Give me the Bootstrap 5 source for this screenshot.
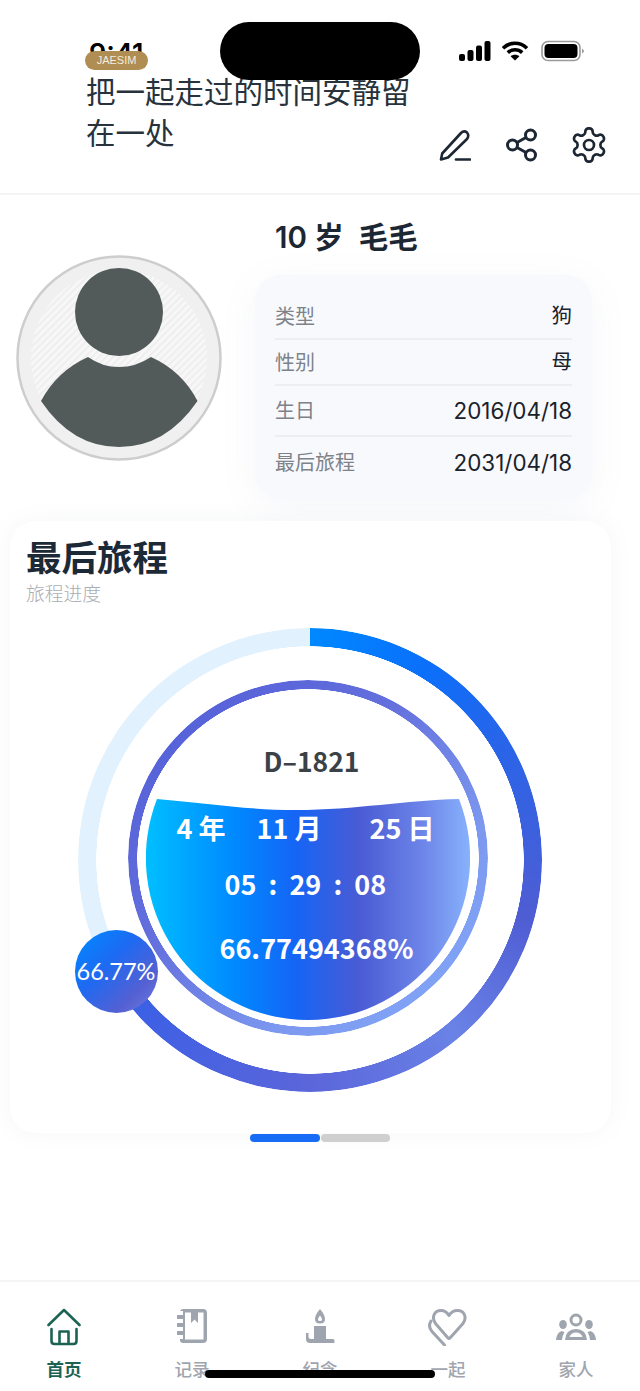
<!DOCTYPE html>
<html lang="zh">
<head>
  <meta charset="UTF-8">
  <meta name="viewport" content="width=device-width, initial-scale=1.0">
  <title>最后旅程</title>
  <link href="https://cdn.jsdelivr.net/npm/bootstrap@5.3.0/dist/css/bootstrap.min.css" rel="stylesheet">
  <style>
    body {
      font-family: Inter, "Noto Sans CJK SC", sans-serif;
      background: #fff;
      color: #1c2733;
    }
    .phone {
      width: 640px;
      height: 1391px;
      overflow: hidden;
    }
    /* status bar + island lie over the header */
    .clock { left: 89px; top: 37px; font-size: 27px; font-weight: 600; color: #000; line-height: 34px; }
    .island { left: 220px; top: 22px; width: 200px; height: 58px; background: #000; border-radius: 29px; z-index: 5; }
    .status-icons { left: 458px; top: 40px; gap: 10px; }
    .status-icons svg:last-child { margin-left: 2px; }
    .home-bar { left: 205px; top: 1370px; width: 230px; height: 8px; background: #000; border-radius: 4px; z-index: 5; }

    .top-head { height: 195px; padding: 51px 31px 0 85px; border-bottom: 2px solid #f3f4f5; }
    .tag-pill { width: 63px; height: 19px; background: #b08d52; color: #f3ecdf; font: 11px/18px "Liberation Sans", sans-serif; text-align: center; border-radius: 9.5px; z-index: 2; }
    .head-title { width: 335px; font-size: 29.5px; line-height: 41px; color: #27323c; margin: 2px 0 0 1px; font-weight: 400; }
    .head-tools { gap: 31px; padding-bottom: 28px; }
    .tool-pen { margin: 0 4px 4px 0; }
    .tool-share { margin-bottom: 3px; }

    .avatar-box { width: 206px; height: 206px; margin: 60px 0 0 16px; }
    .side-info { width: 337px; margin-left: 33px; }
    .pet-name { font-size: 29.5px; line-height: 40px; font-weight: 600; padding: 22px 0 0 20px; color: #1c2733; }
    .info-box { margin-top: 18px; background: #f8f9fd; border-radius: 26px; padding: 19px 20px 12px; box-shadow: 0 8px 36px rgba(130, 140, 180, .08); }
    .info-line { font-size: 22.4px; color: #1a222b; padding-top: 1px; }
    .info-line + .info-line { border-top: 2px solid #eceef1; }
    .info-line span:first-child { color: #7d8389; font-size: 20px; }
    .info-line .cjk-val { font-size: 20.5px; }
    .h-a { height: 44px; }
    .h-b { height: 46px; }
    .h-c { height: 51px; }
    .h-d { height: 52px; }

    .trip-box { width: 601px; margin: 22px 0 0 10px; padding: 13px 16px 41px; border-radius: 26px; background: #fff; box-shadow: 0 0 22px rgba(120, 130, 150, .07); }
    .trip-title { font-size: 35.5px; line-height: 44px; font-weight: 700; color: #1c2a38; font-family: "Noto Sans CJK SC", sans-serif; }
    .trip-sub { font-size: 18.75px; line-height: 24px; margin-top: 5px; color: #a9adb2; font-weight: 300; }

    .dial { width: 464px; height: 464px; margin: 21px auto 0; left: -1px; }
    .ring-outer {
      inset: 0;
      border-radius: 50%;
      background: conic-gradient(#0088ff 0deg, #0a70fb 30deg, #2a64e8 60deg, #4f5dd3 105deg, #6a82e6 140deg, #5b66da 180deg, #3f60e4 225deg, #2f62e6 240.4deg, #e1f2fe 240.4deg, #e1f2fe 360deg);
      -webkit-mask: radial-gradient(closest-side, transparent calc(100% - 18.5px), #000 calc(100% - 18px));
      mask: radial-gradient(closest-side, transparent calc(100% - 18.5px), #000 calc(100% - 18px));
    }
    .ring-inner {
      left: 50px; top: 52px; width: 360px; height: 356px;
      border-radius: 50%;
      background: linear-gradient(135deg, #4f5bd5 0%, #6470dd 40%, #7c98ef 70%, #84acfb 100%);
      -webkit-mask: radial-gradient(closest-side, transparent calc(100% - 9.5px), #000 calc(100% - 9px));
      mask: radial-gradient(closest-side, transparent calc(100% - 9.5px), #000 calc(100% - 9px));
    }
    .day-count { left: 50px; top: 114px; width: 368px; text-align: center; font: 700 26.5px/38px "Noto Sans CJK SC", sans-serif; color: #3a4248; }
    .tank { left: 68px; top: 171px; width: 324px; height: 222px; font-family: "Noto Sans CJK SC", sans-serif; font-weight: 700; color: #fff; }
    .tank svg { left: 0; top: 0; }
    .tank-text { padding-top: 9px; }
    .tank-date { height: 40px; font-size: 27px; line-height: 40px; }
    .tank-date span:nth-child(1) { margin-left: 31px; width: 80px; }
    .tank-date span:nth-child(2) { width: 113px; }
    .tank-time { font-size: 27px; line-height: 40px; margin: 16px 0 0 79px; word-spacing: 6px; }
    .tank-pct { font-size: 27px; line-height: 40px; margin: 24px 0 0 74px; }
    .bubble { left: -3px; top: 302px; width: 83px; height: 83px; border-radius: 50%; background: linear-gradient(135deg, #0088ff 5%, #1e6af2 40%, #5560d2 75%, #6e80e2 100%); color: #fff; font: 400 23.5px/83px Lato, sans-serif; text-align: center; white-space: nowrap; }

    .pager { margin-top: 1px; gap: 1px; }
    .pager i { display: block; width: 70px; height: 8px; border-radius: 4px; background: #cfcfcf; }
    .pager i:first-child { background: #176cf5; }
    .pager i:last-child { width: 69px; }

    .tab-bar { margin-top: auto; height: 111px; border-top: 2px solid #f3f4f5; padding-top: 26px; }
    .tab-item { width: 128px; color: #9fa5ae; font-size: 17.5px; line-height: 24px; font-weight: 500; }
    .tab-item.on { color: #1d6354; font-weight: 700; }
    .tab-pic { height: 38px; margin-bottom: 12px; }
  </style>
</head>
<body>
<div class="phone position-relative d-flex flex-column">

  <!-- status bar -->
  <div class="clock position-absolute">9:41</div>
  <div class="island position-absolute"></div>
  <div class="status-icons position-absolute d-flex align-items-center">
    <svg width="33" height="22" viewBox="0 0 33 22" fill="#000">
      <rect x="1" y="14" width="6" height="7" rx="2"/><rect x="9.5" y="10" width="6" height="11" rx="2"/>
      <rect x="18" y="5.5" width="6" height="15.5" rx="2"/><rect x="26.5" y="1" width="6" height="20" rx="2"/>
    </svg>
    <svg width="28" height="22" viewBox="0 0 28 22" fill="none" stroke="#000" stroke-width="3.6">
      <path d="M2 8.2C9 1.6 19 1.6 26 8.2"/><path d="M6.8 12.6C11 8.8 17 8.8 21.2 12.6"/>
      <path d="M14 20.5L9.6 16.2C12 14.2 16 14.2 18.4 16.2Z" fill="#000" stroke="none"/>
    </svg>
    <svg width="44" height="22" viewBox="0 0 44 22" fill="none">
      <rect x="1" y="1.5" width="38" height="19" rx="6" stroke="#9a9a9a" stroke-width="1.6"/>
      <rect x="3.5" y="4" width="33" height="14" rx="4" fill="#000"/>
      <path d="M41 8.5Q43 10 43 11Q43 12 41 13.5Z" fill="#9a9a9a"/>
    </svg>
  </div>

  <!-- header -->
  <header class="top-head d-flex justify-content-between flex-shrink-0">
    <div>
      <div class="tag-pill position-relative">JAESIM</div>
      <div class="head-title">把一起走过的时间安静留在一处</div>
    </div>
    <div class="head-tools d-flex align-items-end">
      <svg class="tool-pen" width="32" height="32" viewBox="0 0 32 32" fill="none" stroke="#1c2733" stroke-width="2.6" stroke-linecap="round" stroke-linejoin="round">
        <path d="M2 30.5L3.2 24.5L22 4Q25 1 28 3.5Q30.5 6.5 28 10L9 28.5Z"/><path d="M17 30.5H31"/>
      </svg>
      <svg class="tool-share" width="32" height="34" viewBox="0 0 32 34" fill="none" stroke="#1c2733" stroke-width="3">
        <circle cx="24.5" cy="7" r="5"/><circle cx="6.5" cy="17" r="5"/><circle cx="24.5" cy="27" r="5"/>
        <path d="M11 14.5L20 9.5M11 19.5L20 24.5"/>
      </svg>
      <svg width="40" height="40" viewBox="0 0 24 24" fill="none" stroke="#1c2733" stroke-width="1.6" stroke-linecap="round" stroke-linejoin="round">
        <path d="M12.22 2h-.44a2 2 0 0 0-2 2v.18a2 2 0 0 1-1 1.73l-.43.25a2 2 0 0 1-2 0l-.15-.08a2 2 0 0 0-2.73.73l-.22.38a2 2 0 0 0 .73 2.73l.15.1a2 2 0 0 1 1 1.72v.51a2 2 0 0 1-1 1.74l-.15.09a2 2 0 0 0-.73 2.73l.22.38a2 2 0 0 0 2.73.73l.15-.08a2 2 0 0 1 2 0l.43.25a2 2 0 0 1 1 1.73V20a2 2 0 0 0 2 2h.44a2 2 0 0 0 2-2v-.18a2 2 0 0 1 1-1.73l.43-.25a2 2 0 0 1 2 0l.15.08a2 2 0 0 0 2.73-.73l.22-.39a2 2 0 0 0-.73-2.73l-.15-.08a2 2 0 0 1-1-1.74v-.5a2 2 0 0 1 1-1.74l.15-.09a2 2 0 0 0 .73-2.73l-.22-.38a2 2 0 0 0-2.73-.73l-.15.08a2 2 0 0 1-2 0l-.43-.25a2 2 0 0 1-1-1.73V4a2 2 0 0 0-2-2z"/>
        <circle cx="12" cy="12" r="3"/>
      </svg>
    </div>
  </header>

  <!-- profile -->
  <section class="d-flex flex-shrink-0">
    <div class="avatar-box flex-shrink-0">
      <svg width="206" height="206" viewBox="0 0 206 206">
        <defs>
          <pattern id="hatch" width="5" height="5" patternUnits="userSpaceOnUse" patternTransform="rotate(-45)">
            <rect width="5" height="5" fill="#f7f7f7"/><rect width="5" height="1.5" fill="#ececec"/>
          </pattern>
        </defs>
        <circle cx="103" cy="103" r="101.5" fill="#f0f0f0" stroke="#cdcdcd" stroke-width="2.5"/>
        <circle cx="103" cy="103" r="88" fill="url(#hatch)"/>
        <circle cx="103" cy="57" r="44" fill="#535a5a"/>
        <path d="M25 146Q41 116 72 102Q86 112 103 112Q120 112 135 102Q166 116 181.5 146Q150 192 103 192Q56 192 25 146Z" fill="#535a5a"/>
      </svg>
    </div>
    <div class="side-info">
      <div class="pet-name">10 岁&nbsp; 毛毛</div>
      <div class="info-box">
        <div class="info-line h-a d-flex justify-content-between align-items-center"><span>类型</span><span class="cjk-val">狗</span></div>
        <div class="info-line h-b d-flex justify-content-between align-items-center"><span>性别</span><span class="cjk-val">母</span></div>
        <div class="info-line h-c d-flex justify-content-between align-items-center"><span>生日</span><span>2016/04/18</span></div>
        <div class="info-line h-d d-flex justify-content-between align-items-center"><span>最后旅程</span><span>2031/04/18</span></div>
      </div>
    </div>
  </section>

  <!-- journey -->
  <section class="trip-box flex-shrink-0">
    <div class="trip-title">最后旅程</div>
    <div class="trip-sub">旅程进度</div>
    <div class="dial position-relative">
      <div class="ring-outer position-absolute"></div>
      <div class="ring-inner position-absolute"></div>
      <div class="day-count position-absolute">D–1821</div>
      <div class="tank position-absolute">
        <svg class="position-absolute" width="324" height="222" viewBox="0 0 324 222">
          <defs>
            <linearGradient id="water" x1="0" x2="1" y1="0" y2="0">
              <stop offset="0" stop-color="#00bfff"/><stop offset=".28" stop-color="#0088ff"/>
              <stop offset=".46" stop-color="#1565f5"/><stop offset=".66" stop-color="#4a5bd4"/>
              <stop offset=".85" stop-color="#6c84e8"/><stop offset="1" stop-color="#88b2fc"/>
            </linearGradient>
          </defs>
          <path d="M11 0C60 4 100 11 150 11C210 11 260 1 313 0A162 162 0 0 1 162 221A162 162 0 0 1 11 0Z" fill="url(#water)"/>
        </svg>
        <div class="tank-text position-relative">
          <div class="tank-date d-flex"><span>4 年</span><span>11 月</span><span>25 日</span></div>
          <div class="tank-time">05 : 29 : 08</div>
          <div class="tank-pct">66.77494368%</div>
        </div>
      </div>
      <div class="bubble position-absolute">66.77%</div>
    </div>
  </section>

  <div class="pager d-flex justify-content-center">
    <i></i><i></i>
  </div>

  <!-- tabs -->
  <nav class="tab-bar d-flex">
    <div class="tab-item on d-flex flex-column align-items-center">
      <div class="tab-pic">
        <svg width="34" height="38" viewBox="0 0 34 38" fill="none" stroke="#1d6354" stroke-width="2.6" stroke-linecap="round" stroke-linejoin="round">
          <path d="M1.5 17L17 2L32.5 17"/><path d="M4.5 21V33Q4.5 36 7.5 36H26.5Q29.5 36 29.5 33V21"/><path d="M12.5 35V23.5H21.5V35"/>
        </svg>
      </div>
      <span>首页</span>
    </div>
    <div class="tab-item d-flex flex-column align-items-center">
      <div class="tab-pic">
        <svg width="32" height="36" viewBox="0 0 32 36" fill="#9fa5ae">
          <path d="M7 1H27Q31 1 31 5V31Q31 35 27 35H7Q4.500 35 4 33V31H7V27H3V23H7V19H3V15H7V11H3V7H7V3H4Q5 1 7 1ZM9 4.500V31.500H27.500V4.500H22V15L18.500 11.500L15 15V4.500Z" fill-rule="evenodd"/>
          <rect x="1" y="7" width="4" height="4"/><rect x="1" y="15" width="4" height="4"/><rect x="1" y="23" width="4" height="4"/>
        </svg>
      </div>
      <span>记录</span>
    </div>
    <div class="tab-item d-flex flex-column align-items-center">
      <div class="tab-pic">
        <svg width="30" height="36" viewBox="0 0 30 36" fill="#9fa5ae">
          <path d="M15 1Q20 7 20 11Q20 15.500 15 15.500Q10 15.500 10 11Q10 7 15 1ZM15 7.500Q13 10 13 11.500Q13 13 15 13Q17 13 17 11.500Q17 10 15 7.500Z" fill-rule="evenodd"/>
          <rect x="9" y="18" width="12" height="14"/>
          <path d="M1 25H3.500V29Q3.500 31 6 31H28Q29.500 31 29.500 33V35H5Q1 35 1 31Z"/>
        </svg>
      </div>
      <span>纪念</span>
    </div>
    <div class="tab-item d-flex flex-column align-items-center">
      <div class="tab-pic">
        <svg width="40" height="38" viewBox="0 0 40 38" fill="none" stroke="#9fa5ae" stroke-width="3">
          <path d="M20 30L7.500 15.500C3 9 6.500 2.500 13 2.500Q18 2.500 21 7.500Q24 2.500 29.500 2.500C36 2.500 39.500 9 35 15.500L22 30Q21 31 20 30Z" stroke-linejoin="round"/>
          <path d="M3 13C.5 17 1 20 4 23.500L16.500 37" stroke-linecap="round"/>
        </svg>
      </div>
      <span>一起</span>
    </div>
    <div class="tab-item d-flex flex-column align-items-center">
      <div class="tab-pic">
        <svg width="40" height="38" viewBox="0 0 40 38" fill="#9fa5ae">
          <circle cx="20" cy="12" r="5" fill="none" stroke="#9fa5ae" stroke-width="3"/>
          <ellipse cx="7" cy="16.500" rx="3.800" ry="4.500"/><ellipse cx="33" cy="16.500" rx="3.800" ry="4.500"/>
          <path d="M9 32Q10 21 20 21Q30 21 31 32ZM13.500 29H26.500Q25 24.500 20 24.500Q15 24.500 13.500 29Z" fill-rule="evenodd"/>
          <path d="M0 32Q.5 25 5.500 23Q7.500 24 8.500 24Q6.500 27 6 32ZM40 32Q39.500 25 34.500 23Q32.500 24 31.500 24Q33.500 27 34 32Z"/>
        </svg>
      </div>
      <span>家人</span>
    </div>
  </nav>

  <div class="home-bar position-absolute"></div>
</div>
<script src="https://cdn.jsdelivr.net/npm/bootstrap@5.3.0/dist/js/bootstrap.bundle.min.js"></script>
</body>
</html>
